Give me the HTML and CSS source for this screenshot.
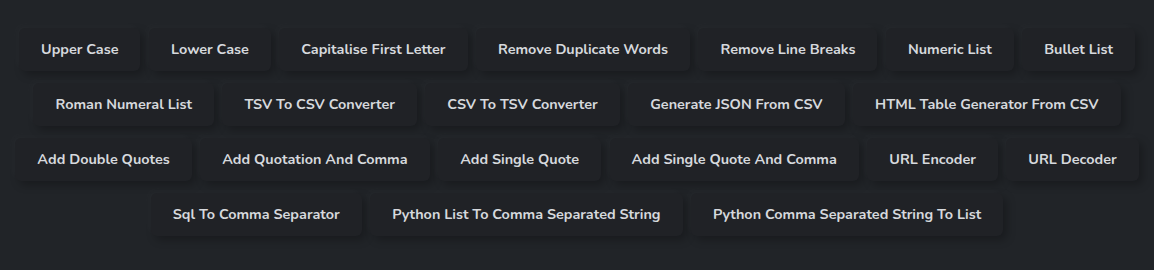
FILE: index.html
```html
<!DOCTYPE html>
<html lang="en">
<head>
  <meta charset="UTF-8">
  <meta name="viewport" content="width=device-width, initial-scale=1.0">
  <title>Text Tools</title>
  <link rel="stylesheet" href="styles.css">
</head>
<body>
  <div class="tools">
    <button class="tool-btn">Upper Case</button>
    <button class="tool-btn">Lower Case</button>
    <button class="tool-btn">Capitalise First Letter</button>
    <button class="tool-btn">Remove Duplicate Words</button>
    <button class="tool-btn">Remove Line Breaks</button>
    <button class="tool-btn">Numeric List</button>
    <button class="tool-btn">Bullet List</button>
    <button class="tool-btn">Roman Numeral List</button>
    <button class="tool-btn">TSV To CSV Converter</button>
    <button class="tool-btn">CSV To TSV Converter</button>
    <button class="tool-btn">Generate JSON From CSV</button>
    <button class="tool-btn">HTML Table Generator From CSV</button>
    <button class="tool-btn">Add Double Quotes</button>
    <button class="tool-btn">Add Quotation And Comma</button>
    <button class="tool-btn">Add Single Quote</button>
    <button class="tool-btn">Add Single Quote And Comma</button>
    <button class="tool-btn">URL Encoder</button>
    <button class="tool-btn">URL Decoder</button>
    <button class="tool-btn">Sql To Comma Separator</button>
    <button class="tool-btn">Python List To Comma Separated String</button>
    <button class="tool-btn">Python Comma Separated String To List</button>
  </div>
</body>
</html>
```

FILE: styles.css
```css
:root {
  --bg-color: #212428;
  --btn-bg: #202226;
  --text-color: #d6d9dd;
}

body {
  background-color: var(--bg-color);
  color: var(--text-color);
  font-family: 'Nunito', 'Lato', sans-serif;
  margin: 0;
  min-height: 100vh;
}

.tools {
  display: flex;
  flex-wrap: wrap;
  justify-content: center;
  gap: 12px 8.5px;
  padding: 28px 6px 0;
}

.tool-btn {
  background-color: var(--btn-bg);
  color: var(--text-color);
  border: none;
  border-radius: 6px;
  height: 43px;
  padding: 0 22px 2px;
  font-family: inherit;
  font-size: 14.4px;
  font-weight: bold;
  cursor: pointer;
  box-shadow: -3px -3px 7px rgba(255, 255, 255, 0.025), 4px 4px 8px rgba(0, 0, 0, 0.25);
  transition: transform 0.3s ease;
}

.tool-btn:hover {
  transform: translateY(-2px);
}
```
